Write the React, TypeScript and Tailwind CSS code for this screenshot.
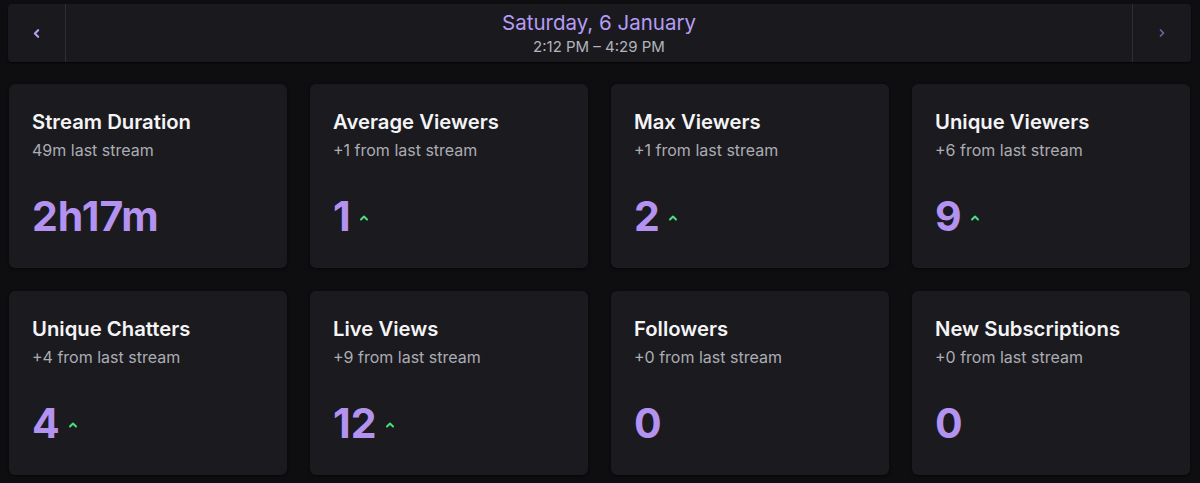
import { ChevronLeft, ChevronRight, ChevronUp } from 'lucide-react';

const stats = [
  { title: 'Stream Duration', sub: '49m last stream', value: '2h17m', up: false },
  { title: 'Average Viewers', sub: '+1 from last stream', value: '1', up: true },
  { title: 'Max Viewers', sub: '+1 from last stream', value: '2', up: true },
  { title: 'Unique Viewers', sub: '+6 from last stream', value: '9', up: true },
  { title: 'Unique Chatters', sub: '+4 from last stream', value: '4', up: true },
  { title: 'Live Views', sub: '+9 from last stream', value: '12', up: true },
  { title: 'Followers', sub: '+0 from last stream', value: '0', up: false },
  { title: 'New Subscriptions', sub: '+0 from last stream', value: '0', up: false }
];

export default function App() {
  return (
    <main
      className="min-h-[483px] w-[1200px] bg-[#0e0e10] pt-[4px] pl-[8px] pr-[9px]"
      style={{ fontFamily: 'Inter, "Noto Sans", sans-serif' }}
    >
      {/* date switcher */}
      <div className="flex h-[58px] items-stretch rounded-sm bg-[#1a1a1e] shadow-[0_1px_2px_rgba(0,0,0,0.6)]">
        <button className="flex w-[58px] items-center justify-center border-r border-[#2e2e34] text-[#b69cf5]">
          <ChevronLeft className="h-[13px] w-[13px]" strokeWidth={4} />
        </button>
        <div className="flex flex-1 flex-col items-center justify-center">
          <p className="text-[20.5px] leading-[28px] text-[#b69cf5]">Saturday, 6 January</p>
          <p className="text-[15px] leading-[20px] text-[#b4b4bc]">2:12 PM – 4:29 PM</p>
        </div>
        <button className="flex w-[59px] items-center justify-center border-l border-[#2e2e34] text-[#6f63a0]">
          <ChevronRight className="h-[12px] w-[12px]" strokeWidth={3.5} />
        </button>
      </div>

      {/* stat cards */}
      <div className="mt-[22px] grid grid-cols-4 gap-x-[23px] gap-y-[23px] pl-[1px] pr-[1px]">
        {stats.map((s) => (
          <div
            key={s.title}
            className="h-[184px] rounded-md bg-[#1b1b1f] px-[23px] pt-[24px] shadow-[0_1px_3px_rgba(0,0,0,0.6)]"
          >
            <h3 className="text-[20.3px] font-semibold leading-[28px] text-[#f4f4f6]">{s.title}</h3>
            <p className="mt-[2px] text-[16px] leading-[24px] text-[#acacb4]">{s.sub}</p>
            <div className="mt-[34px] flex items-center gap-[7px]">
              <span className="text-[41px] font-bold leading-[40px] text-[#b392f0]">{s.value}</span>
              {s.up && (
                <ChevronUp className="mt-[4px] h-[12px] w-[12px] text-[#4ade80]" strokeWidth={4} />
              )}
            </div>
          </div>
        ))}
      </div>
    </main>
  );
}
